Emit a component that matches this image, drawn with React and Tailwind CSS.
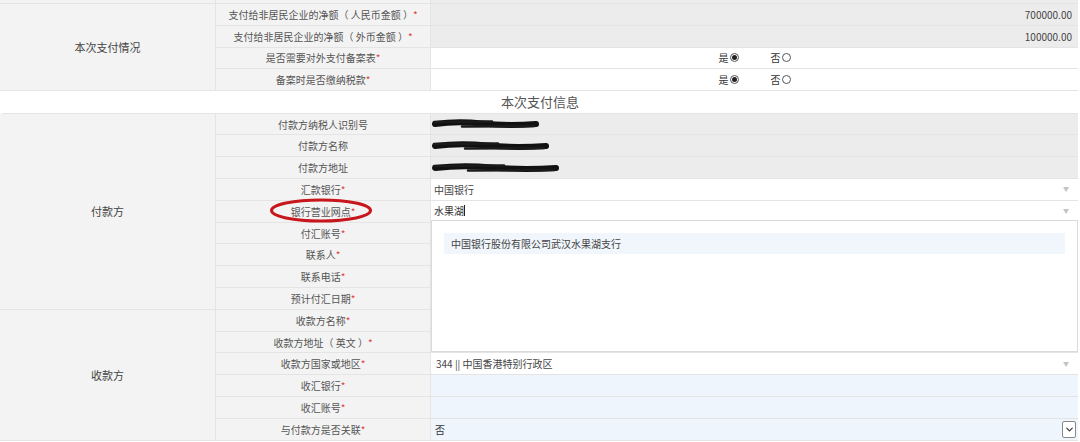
import React from 'react';
import { ChevronDown } from 'lucide-react';

const font = { fontFamily: '"Noto Sans CJK SC", "Noto Sans", sans-serif' };

function Req() {
  return <span className="text-[#e0403a]">*</span>;
}

function Arrow() {
  return <span className="ml-auto mr-[9px] text-[6px] text-[#c4c4c4] leading-none">▼</span>;
}

function Scribble({ w }) {
  return (
    <svg width={w + 8} height="12" viewBox={`0 0 ${w + 8} 12`}>
      <path d={`M3 6 Q ${w / 4} 3 ${w / 2} 5.5 T ${w + 4} 6`} stroke="#111" strokeWidth="6" strokeLinecap="round" fill="none" />
      <path d={`M2 4 L ${w * 0.6} 3.5 M ${w * 0.3} 8.5 L ${w + 2} 8`} stroke="#1a1a1a" strokeWidth="2.5" strokeLinecap="round" fill="none" />
    </svg>
  );
}

function Row({ label, req, children, valueClass = 'bg-[#ececec]' }) {
  return (
    <div className="flex h-[21.8px] border-b border-[#e4e4e4]">
      <div className="w-[215px] shrink-0 bg-[#f3f3f3] border-r border-[#e4e4e4] flex items-center justify-center text-[10px] text-[#555]">
        {label}
        {req && <Req />}
      </div>
      <div className={`flex-1 flex items-center text-[10px] text-[#444] ${valueClass}`}>{children}</div>
    </div>
  );
}

function Radios() {
  return (
    <div className="w-full flex items-center justify-center gap-[32px] text-[10px] text-[#333]">
      <span className="flex items-center">
        是
        <span className="ml-[1px] w-[9px] h-[9px] rounded-full border border-[#555] bg-white flex items-center justify-center">
          <span className="w-[5px] h-[5px] rounded-full bg-[#222]" />
        </span>
      </span>
      <span className="flex items-center">
        否
        <span className="ml-[1px] w-[9px] h-[9px] rounded-full border border-[#555] bg-white" />
      </span>
    </div>
  );
}

function Section({ title, children }) {
  return (
    <div className="flex">
      <div className="w-[216px] shrink-0 bg-[#f3f3f3] border-r border-b border-[#e4e4e4] flex items-center justify-center text-[11px] text-[#444]">
        {title}
      </div>
      <div className="flex-1 flex flex-col">{children}</div>
    </div>
  );
}

export default function App() {
  return (
    <div className="w-[1080px] h-[442px] bg-white overflow-hidden" style={font}>
      <div className="relative w-[1078px]">
        <div className="flex h-[4px] border-b border-[#e4e4e4]">
          <div className="w-[216px] bg-[#f3f3f3] border-r border-[#e4e4e4]" />
          <div className="w-[215px] bg-[#f3f3f3] border-r border-[#e4e4e4]" />
          <div className="flex-1 bg-[#ececec]" />
        </div>

        <Section title="本次支付情况">
          <Row label="支付给非居民企业的净额（ 人民币金额 ）" req>
            <span className="ml-auto mr-[6px]">700000.00</span>
          </Row>
          <Row label="支付给非居民企业的净额（ 外币金额 ）" req>
            <span className="ml-auto mr-[6px]">100000.00</span>
          </Row>
          <Row label="是否需要对外支付备案表" req valueClass="bg-white">
            <Radios />
          </Row>
          <Row label="备案时是否缴纳税款" req valueClass="bg-white">
            <Radios />
          </Row>
        </Section>

        <div className="h-[22.5px] ml-[2px] bg-white border-b border-[#e4e4e4] flex items-center justify-center text-[13px] text-[#555]">
          本次支付信息
        </div>

        <Section title="付款方">
          <Row label="付款方纳税人识别号">
            <span className="ml-[1px]"><Scribble w={100} /></span>
          </Row>
          <Row label="付款方名称">
            <span className="ml-[1px]"><Scribble w={110} /></span>
          </Row>
          <Row label="付款方地址">
            <span className="ml-[1px]"><Scribble w={120} /></span>
          </Row>
          <Row label="汇款银行" req valueClass="bg-white">
            <span className="ml-[3px]">中国银行</span>
            <Arrow />
          </Row>
          <Row label="银行营业网点" req valueClass="bg-white border-b border-[#cfcfcf]">
            <span className="ml-[3px] text-[#333]">水果湖</span>
            <span className="w-[1px] h-[11px] bg-[#222]" />
            <Arrow />
          </Row>
          <Row label="付汇账号" req valueClass="bg-white" />
          <Row label="联系人" req valueClass="bg-white" />
          <Row label="联系电话" req valueClass="bg-white" />
          <Row label="预计付汇日期" req valueClass="bg-white" />
        </Section>

        <Section title="收款方">
          <Row label="收款方名称" req valueClass="bg-white" />
          <Row label="收款方地址（ 英文 ）" req valueClass="bg-white" />
          <Row label="收款方国家或地区" req valueClass="bg-white">
            <span className="ml-[5px] text-[#444]">344 || 中国香港特别行政区</span>
            <Arrow />
          </Row>
          <Row label="收汇银行" req valueClass="bg-[#eef5fc]" />
          <Row label="收汇账号" req valueClass="bg-[#eef5fc]" />
          <Row label="与付款方是否关联" req valueClass="bg-[#eef5fc]">
            <span className="ml-[4px] text-[#333]">否</span>
            <span className="ml-auto mr-[2px] w-[14px] h-[17px] border border-[#888] rounded-[2px] bg-white flex items-center justify-center">
              <ChevronDown size={11} strokeWidth={2.5} color="#333" />
            </span>
          </Row>
        </Section>

        {/* suggestion dropdown */}
        <div className="absolute left-[431px] top-[220px] w-[647px] h-[132px] bg-white border border-[#dadada] pt-[12px] px-[12px]">
          <div className="h-[21px] bg-[#f0f6fc] flex items-center pl-[7px] text-[10px] text-[#444]">
            中国银行股份有限公司武汉水果湖支行
          </div>
        </div>

        {/* red hand-drawn ellipse */}
        <svg className="absolute left-[269px] top-[197px]" width="104" height="27" viewBox="0 0 104 27">
          <ellipse cx="52" cy="13.5" rx="49.5" ry="10.5" fill="none" stroke="#c8161d" strokeWidth="3" />
        </svg>
      </div>
    </div>
  );
}
